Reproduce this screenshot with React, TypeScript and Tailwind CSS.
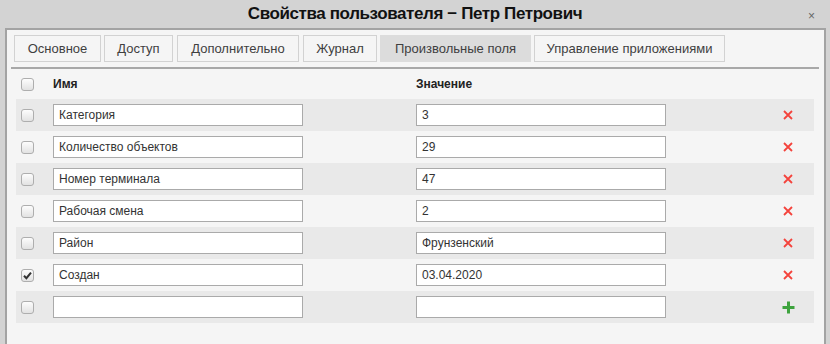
import React from 'react';

const tabs = [
  { label: 'Основное', w: 87 },
  { label: 'Доступ', w: 69 },
  { label: 'Дополнительно', w: 122 },
  { label: 'Журнал', w: 74 },
  { label: 'Произвольные поля', w: 151, active: true },
  { label: 'Управление приложениями', w: 191 },
];

const rows = [
  { name: 'Категория', value: '3' },
  { name: 'Количество объектов', value: '29' },
  { name: 'Номер терминала', value: '47' },
  { name: 'Рабочая смена', value: '2' },
  { name: 'Район', value: 'Фрунзенский' },
  { name: 'Создан', value: '03.04.2020', checked: true },
];

function Checkbox({ checked }: { checked?: boolean }) {
  return (
    <div className="w-[13px] h-[13px] rounded-[3px] border border-[#aeaeae] bg-gradient-to-b from-[#fdfdfd] to-[#e2e2e2] flex items-center justify-center shrink-0">
      {checked && (
        <svg width="9" height="9" viewBox="0 0 9 9">
          <path d="M1 4.8 L3.4 7.2 L8 1.6" fill="none" stroke="#333" strokeWidth="2" />
        </svg>
      )}
    </div>
  );
}

function Field({ value }: { value: string }) {
  return (
    <div className="w-[250px] h-[22px] border border-[#aaaaaa] bg-white pl-[5px] flex items-center text-[12px] text-[#333] shrink-0">
      {value}
    </div>
  );
}

export default function App() {
  return (
    <div className="w-[830px] h-[344px] bg-[#d3d3d3] flex flex-col overflow-hidden font-['Liberation_Sans',Arial,sans-serif]">
      <div className="h-[28px] relative flex items-center justify-center">
        <span className="text-[17px] font-bold text-[#111] tracking-[-0.4px]">Свойства пользователя − Петр Петрович</span>
        <span className="absolute right-[15px] top-[10px] text-[12px] text-[#666] leading-none">×</span>
      </div>
      <div className="ml-[5px] w-[821px] flex-1 border-2 border-b-0 border-[#a3a3a3] bg-[#f5f5f5]">
        <div className="flex pt-[5px] pl-[7px] gap-[3px]">
          {tabs.map((t, i) => (
            <div
              key={t.label}
              style={{ width: t.w }}
              className={`h-[27px] flex items-center justify-center text-[13px] text-[#3f3f3f] border ${
                t.active ? 'bg-[#dcdcdc] border-[#dcdcdc]' : 'bg-[#f5f5f5] border-[#d2d2d2]'
              } ${i === 2 || i === 3 ? 'ml-[1px]' : ''}`}
            >
              {t.label}
            </div>
          ))}
        </div>
        <div className="mt-[5px] ml-[4px] mr-[5px] h-[2px] bg-[#a8a8a8]" />

        <div className="ml-[9px] w-[798px]">
          <div className="h-[30px] flex items-center pl-[5px] text-[12px] font-bold text-[#222]">
            <Checkbox />
            <span className="ml-[19px] w-[250px]">Имя</span>
            <span className="ml-[113px]">Значение</span>
          </div>
          {rows.map((r, i) => (
            <div key={r.name} className={`h-[32px] flex items-center pl-[5px] ${i % 2 === 0 ? 'bg-[#e9e9e9]' : ''}`}>
              <Checkbox checked={r.checked} />
              <div className="ml-[19px]">
                <Field value={r.name} />
              </div>
              <div className="ml-[113px]">
                <Field value={r.value} />
              </div>
              <svg className="ml-[117px]" width="10" height="10" viewBox="0 0 10 10">
                <path d="M1 1 L9 9 M9 1 L1 9" stroke="#f4433c" strokeWidth="1.8" />
              </svg>
            </div>
          ))}
          <div className="h-[32px] flex items-center pl-[5px] bg-[#e9e9e9]">
            <Checkbox />
            <div className="ml-[19px]">
              <Field value="" />
            </div>
            <div className="ml-[113px]">
              <Field value="" />
            </div>
            <svg className="ml-[116px]" width="13" height="13" viewBox="0 0 13 13">
              <path d="M6.5 0.5 V12.5 M0.5 6.5 H12.5" stroke="#3ea33e" strokeWidth="3" />
            </svg>
          </div>
        </div>
      </div>
    </div>
  );
}
